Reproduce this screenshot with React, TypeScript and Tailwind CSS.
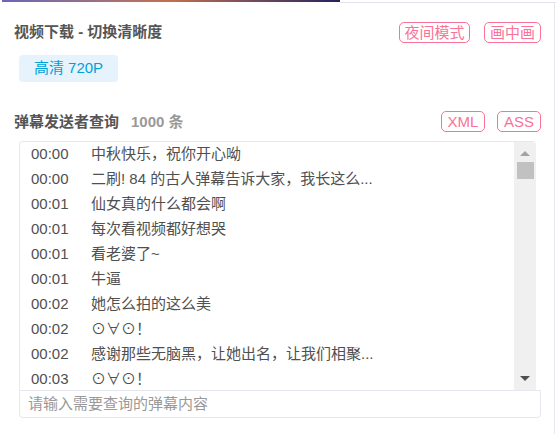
const rows = [
  ['00:00', '中秋快乐，祝你开心呦'],
  ['00:00', '二刷! 84 的古人弹幕告诉大家，我长这么...'],
  ['00:01', '仙女真的什么都会啊'],
  ['00:01', '每次看视频都好想哭'],
  ['00:01', '看老婆了~'],
  ['00:01', '牛逼'],
  ['00:02', '她怎么拍的这么美'],
  ['00:02', '⊙∀⊙！'],
  ['00:02', '感谢那些无脑黑，让她出名，让我们相聚...'],
  ['00:03', '⊙∀⊙！'],
] as const

function PinkTag({ w, children }: { w: string; children: React.ReactNode }) {
  return (
    <span
      className={`flex h-[21px] items-center justify-center rounded-[5px] border border-[#fb7299] text-[15px] leading-none text-[#fb7299] ${w}`}
    >
      {children}
    </span>
  )
}

export default function App() {
  return (
    <div className="relative h-[440px] w-[556px] overflow-hidden bg-white font-['Liberation_Sans','Noto_Sans_CJK_SC',sans-serif]">
      {/* video frame edge + panel border */}
      <div className="flex h-[3px]">
        <div className="ml-[2px] h-[2px] w-[338px] bg-gradient-to-r from-[#6b64b8] via-[#c2704a] to-[#2a1f5c]" />
        <div className="mt-[2px] h-[1px] flex-1 bg-[#e3e3ee]" />
      </div>
      <div className="absolute top-[2px] right-[1px] bottom-[6px] w-px bg-[#e7e7ef]" />

      <div className="pr-[15px] pl-[14px]">
        <div className="mt-[18px] flex items-center justify-between">
          <span className="text-[15px] font-bold text-[#555]">视频下载 - 切换清晰度</span>
          <div className="flex gap-[14px]">
            <PinkTag w="w-[71px]">夜间模式</PinkTag>
            <PinkTag w="w-[57px]">画中画</PinkTag>
          </div>
        </div>

        <div className="mt-[11px] ml-[5px] flex h-[27px] w-[99px] items-center justify-center rounded-[4px] bg-[#e6f3fd] text-[15px] text-[#00a1d6]">
          高清 720P
        </div>

        <div className="mt-[29px] flex items-center justify-between">
          <span className="text-[15px] font-bold text-[#555]">
            弹幕发送者查询<span className="ml-[12px] text-[#999]">1000 条</span>
          </span>
          <div className="flex gap-[12px]">
            <PinkTag w="w-[44px]">XML</PinkTag>
            <PinkTag w="w-[44px]">ASS</PinkTag>
          </div>
        </div>

        <div className="mt-[8px] ml-[5px]">
          <div className="flex h-[249px] w-[517px] overflow-hidden rounded-t-[4px] border-t border-l border-[#e5e9ef]">
            <div className="flex-1">
              {rows.map(([t, c], i) => (
                <div key={i} className="flex h-[25px] items-center text-[15px] text-[#505050]">
                  <span className="w-[71px] pl-[11px]">{t}</span>
                  <span className="whitespace-nowrap">{c}</span>
                </div>
              ))}
            </div>
            <div className="flex w-[22px] flex-col items-center bg-[#f0f0f0]">
              <div className="mt-[9px] h-0 w-0 border-x-[5px] border-b-[5px] border-x-transparent border-b-[#a3a3a3]" />
              <div className="mt-[6px] h-[17px] w-[17px] bg-[#c1c1c1]" />
              <div className="flex-1" />
              <div className="mb-[9px] h-0 w-0 border-x-[5px] border-t-[5px] border-x-transparent border-t-[#505050]" />
            </div>
          </div>
          <div className="flex h-[28px] w-[522px] items-center rounded-b-[4px] border border-[#e5e9ef] pl-[8px] text-[15px] text-[#999]">
            请输入需要查询的弹幕内容
          </div>
        </div>
      </div>
    </div>
  )
}
